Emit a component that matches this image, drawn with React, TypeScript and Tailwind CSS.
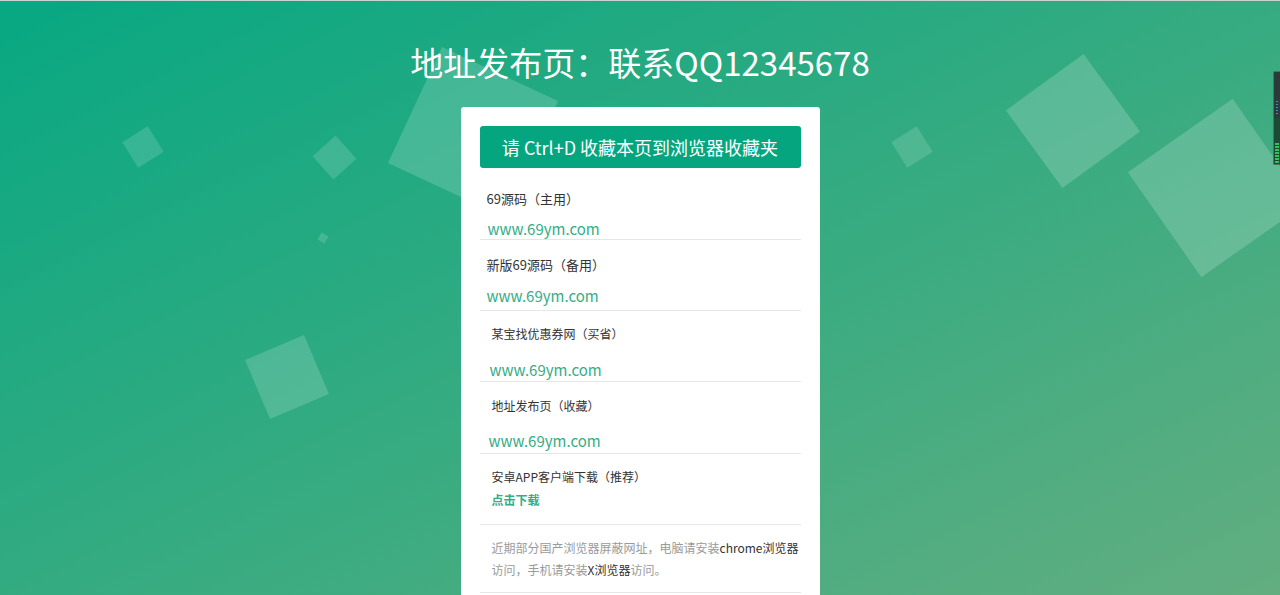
import React from "react";

const font = { fontFamily: '"Microsoft YaHei", "Noto Sans CJK SC", "Noto Sans", sans-serif' };

function Url({ className }: { className: string }) {
    return <div className={`text-[15px] leading-5 text-[#35ad86] ${className}`}>www.69ym.com</div>;
}

export default function App() {
    return (
        <div
            className="relative min-h-screen overflow-hidden border-t border-[#c9d3cf] bg-[linear-gradient(to_bottom_right,#07a882,#65ae80)]"
            style={font}
        >
            {/* background squares */}
            <div className="absolute left-[128px] top-[131px] h-[30px] w-[30px] rotate-[-32deg] bg-white/[0.14]" />
            <div className="absolute left-[319px] top-[141px] h-[31px] w-[31px] rotate-[-42deg] bg-white/[0.15]" />
            <div className="absolute left-[319px] top-[233px] h-[8px] w-[8px] rotate-[30deg] bg-white/[0.15]" />
            <div className="absolute left-[409px] top-[67px] h-[128px] w-[128px] rotate-[25deg] bg-white/[0.17]" />
            <div className="absolute left-[255px] top-[344px] h-[64px] w-[64px] rotate-[-23deg] bg-white/[0.17]" />
            <div className="absolute left-[897px] top-[131px] h-[30px] w-[30px] rotate-[-32deg] bg-white/[0.14]" />
            <div className="absolute left-[1025px] top-[72px] h-[96px] w-[96px] rotate-[-36deg] bg-white/[0.19]" />
            <div className="absolute left-[1153px] top-[123px] h-[128px] w-[128px] rotate-[-35deg] bg-white/[0.18]" />

            {/* side widget */}
            <div className="absolute right-0 top-[70px] flex h-[94px] w-[7px] flex-col overflow-hidden rounded-l-[2px] border border-r-0 border-[#5a6b66] bg-[#2d3a3a]">
                <div className="flex h-[46px] flex-col items-center justify-end gap-[2px] pb-1">
                    <span className="h-[1px] w-[2px] bg-[#3f8fc0]" />
                    <span className="h-[1px] w-[2px] bg-[#3f8fc0]" />
                    <span className="h-[1px] w-[2px] bg-[#3f8fc0]" />
                    <span className="h-[1px] w-[2px] bg-[#3f8fc0]" />
                    <span className="h-[1px] w-[2px] bg-[#3f8fc0]" />
                </div>
                <div className="flex flex-1 flex-col justify-end gap-[1px] bg-[#1c4a35] px-[1px] pb-[1px]">
                    <span className="h-[2px] bg-[#33c05a]" />
                    <span className="h-[2px] bg-[#33c05a]" />
                    <span className="h-[2px] bg-[#33c05a]" />
                    <span className="h-[2px] bg-[#33c05a]" />
                    <span className="h-[2px] bg-[#33c05a]" />
                    <span className="h-[2px] bg-[#33c05a]" />
                    <span className="h-[2px] bg-[#33c05a]" />
                </div>
            </div>

            <div className="relative flex flex-col items-center">
                <h1 className="mt-[38px] text-[33px] leading-[46px] font-normal text-white">
                    地址发布页：联系QQ12345678
                </h1>

                <div className="mt-[22px] w-[359px] rounded-[3px] bg-white px-[19px] pt-[19px] pb-10">
                    <div className="flex h-[42px] items-center justify-center rounded-[3px] bg-[#05a67f] text-[18px] text-white">
                        请 Ctrl+D 收藏本页到浏览器收藏夹
                    </div>

                    <div className="border-b border-[#e6e6e6] pt-[21px]">
                        <div className="pl-[7px] text-[13px] leading-5 text-[#333]">69源码（主用）</div>
                        <Url className="mt-[10px] pl-[8px]" />
                    </div>

                    <div className="border-b border-[#e6e6e6] pt-[15px] pb-[4px]">
                        <div className="pl-[7px] text-[13px] leading-5 text-[#333]">新版69源码（备用）</div>
                        <Url className="mt-[11px] pl-[7px]" />
                    </div>

                    <div className="border-b border-[#e6e6e6] pt-[13px] pb-[1px]">
                        <div className="pl-[12px] text-[12px] leading-5 text-[#333]">某宝找优惠券网（买省）</div>
                        <Url className="mt-[16px] pl-[10px]" />
                    </div>

                    <div className="border-b border-[#e6e6e6] pt-[14px] pb-[2px]">
                        <div className="pl-[12px] text-[12px] leading-5 text-[#333]">地址发布页（收藏）</div>
                        <Url className="mt-[15px] pl-[9px]" />
                    </div>

                    <div className="border-b border-[#e6e6e6] pt-[13px] pb-[14px]">
                        <div className="pl-[12px] text-[12px] leading-5 text-[#333]">安卓APP客户端下载（推荐）</div>
                        <div className="mt-[3px] pl-[12px] text-[12px] leading-5 font-bold text-[#35ad86]">点击下载</div>
                    </div>

                    <div className="border-b border-[#e6e6e6] pt-[12px] pb-[11px] pl-[12px] text-[12px] leading-[22px] text-[#9a9a9a]">
                        近期部分国产浏览器屏蔽网址，电脑请安装<span className="text-[#333]">chrome浏览器</span>访问，手机请安装<span className="text-[#333]">X浏览器</span>访问。
                    </div>
                </div>
            </div>
        </div>
    );
}
